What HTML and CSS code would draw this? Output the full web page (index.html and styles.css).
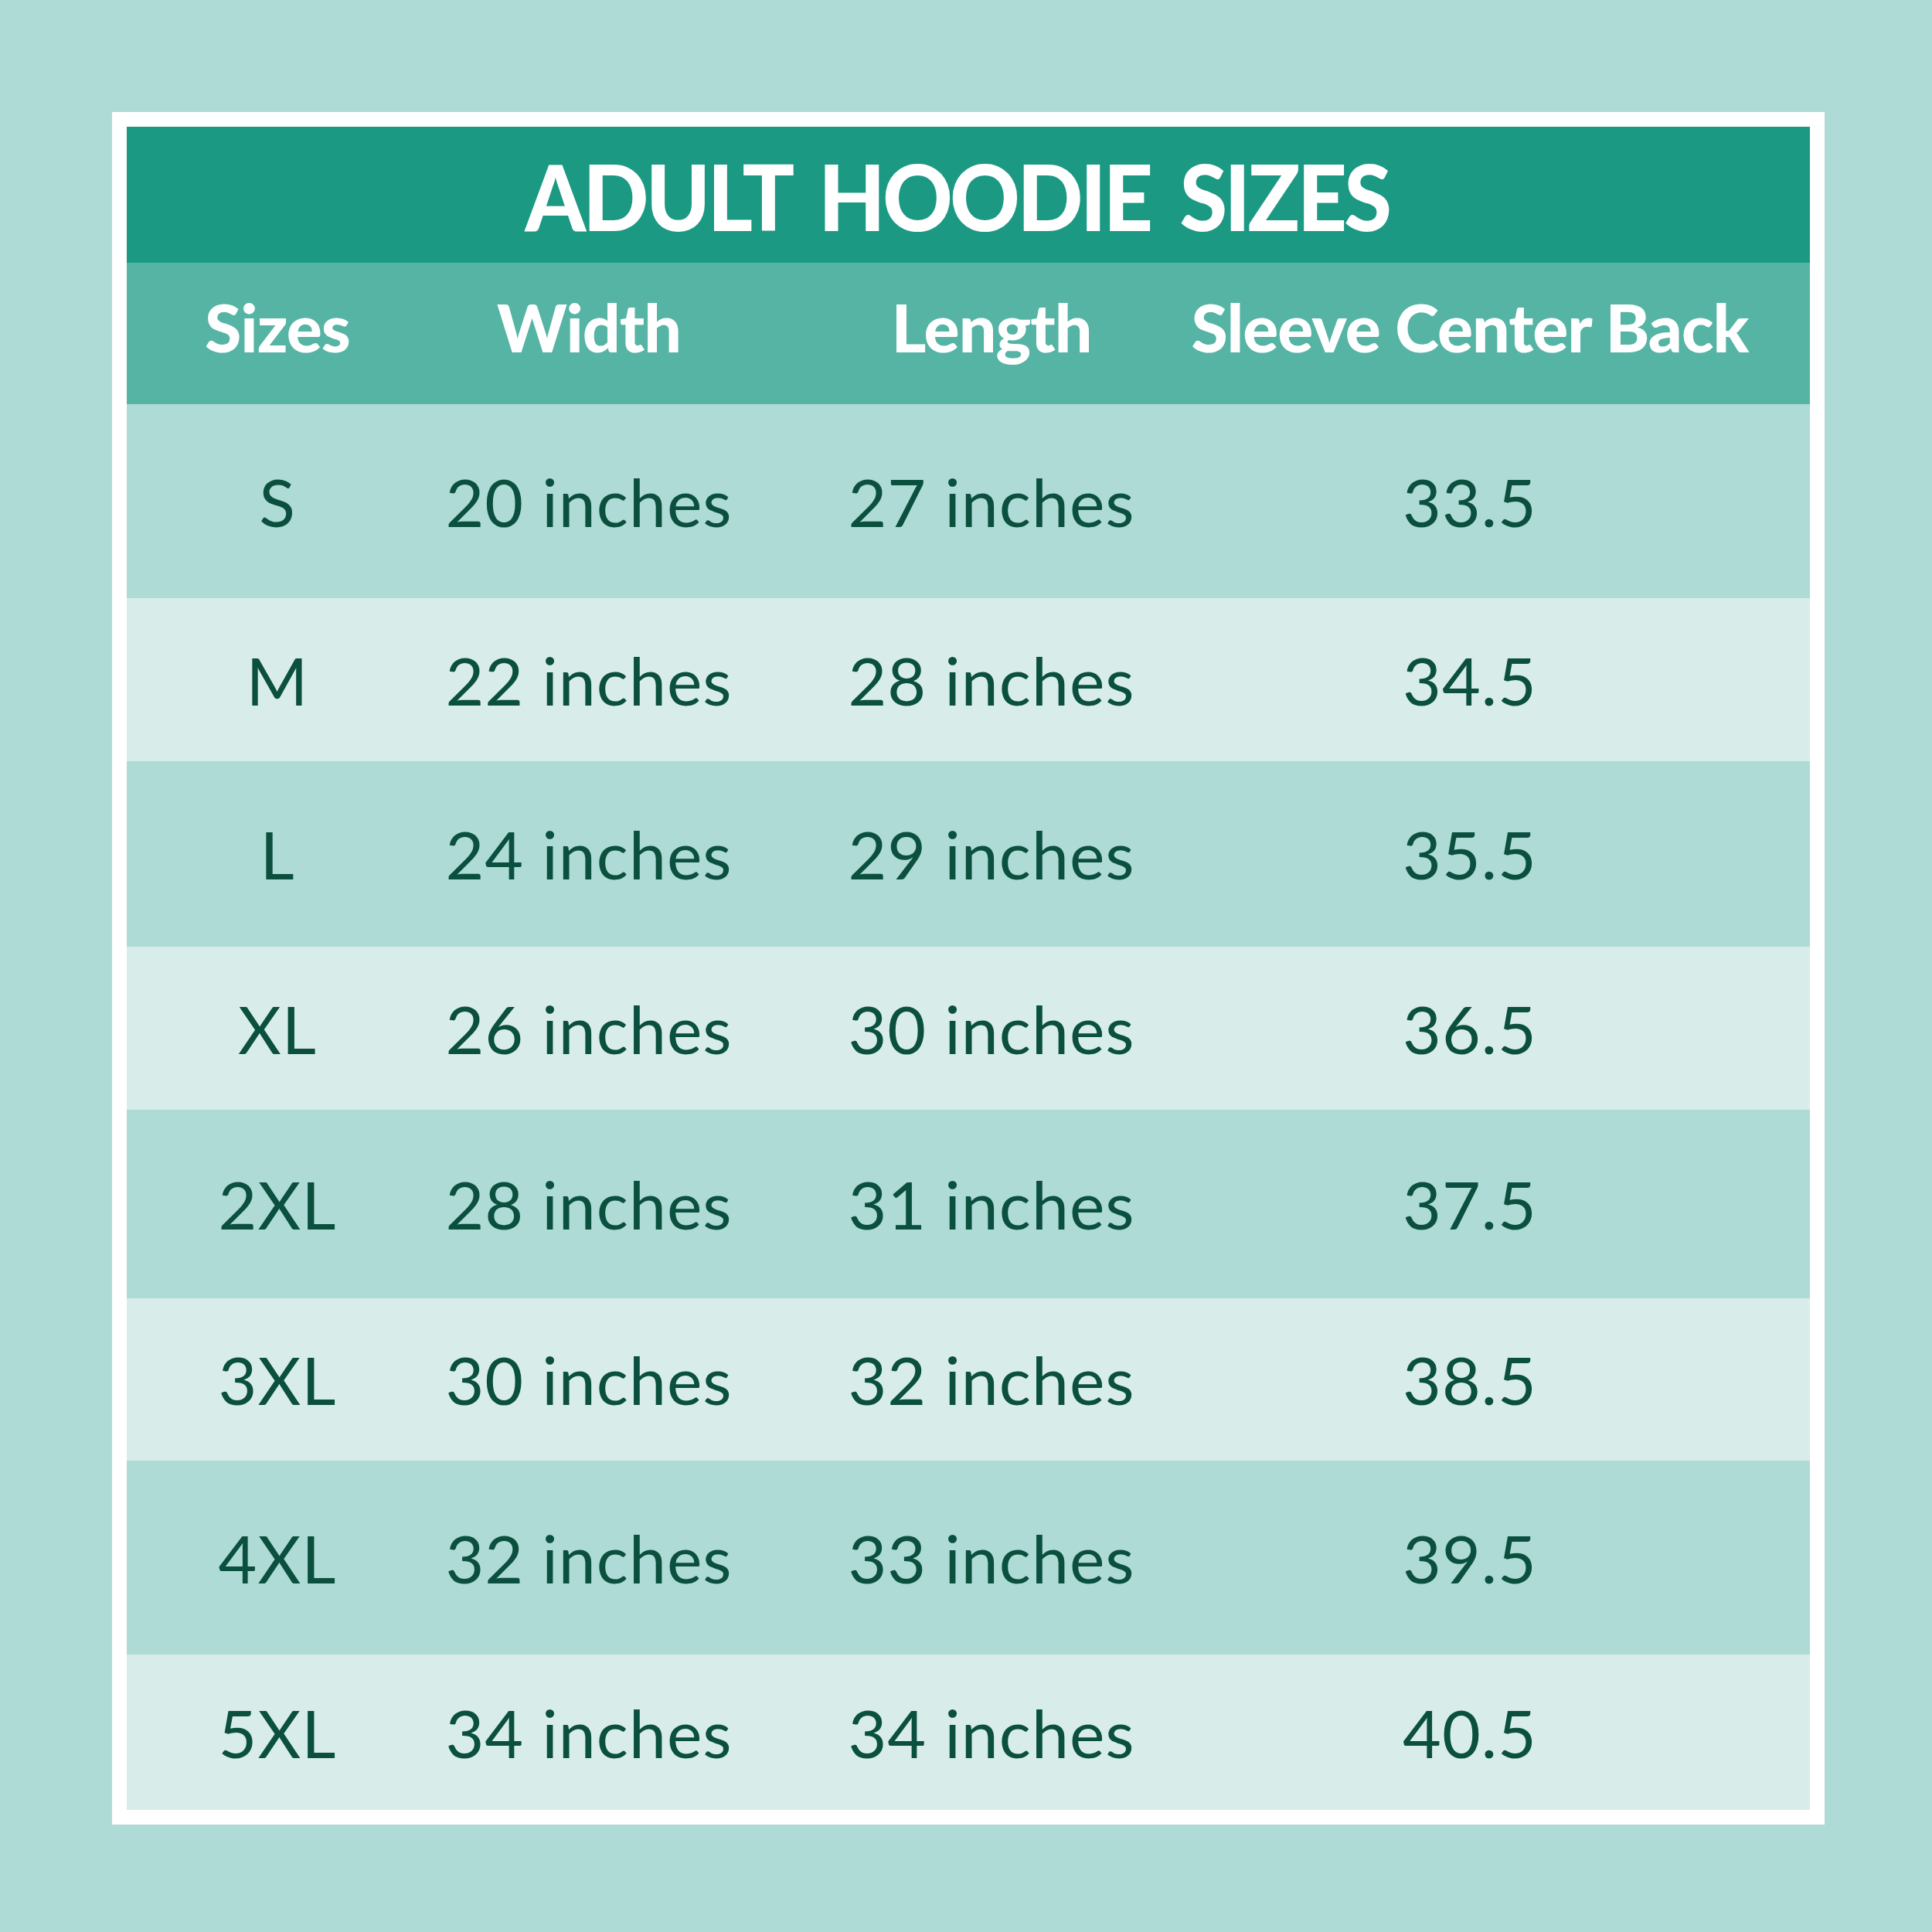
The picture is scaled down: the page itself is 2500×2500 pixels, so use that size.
FILE: index.html
```html
<!DOCTYPE html>
<html lang="en">
<head>
<meta charset="utf-8">
<title>Adult Hoodie Sizes</title>
<link rel="stylesheet" href="styles.css">
</head>
<body>
<main class="frame">
  <h1 class="title"><span class="title-text">ADULT HOODIE SIZES</span></h1>
  <div class="row head">
    <div class="cell">Sizes</div>
    <div class="cell">Width</div>
    <div class="cell">Length</div>
    <div class="cell">Sleeve Center Back</div>
  </div>
  <div class="rows">
    <div class="row"><div class="cell">S</div><div class="cell">20 inches</div><div class="cell">27 inches</div><div class="cell">33.5</div></div>
    <div class="row"><div class="cell">M</div><div class="cell">22 inches</div><div class="cell">28 inches</div><div class="cell">34.5</div></div>
    <div class="row"><div class="cell">L</div><div class="cell">24 inches</div><div class="cell">29 inches</div><div class="cell">35.5</div></div>
    <div class="row"><div class="cell">XL</div><div class="cell">26 inches</div><div class="cell">30 inches</div><div class="cell">36.5</div></div>
    <div class="row"><div class="cell">2XL</div><div class="cell">28 inches</div><div class="cell">31 inches</div><div class="cell">37.5</div></div>
    <div class="row"><div class="cell">3XL</div><div class="cell">30 inches</div><div class="cell">32 inches</div><div class="cell">38.5</div></div>
    <div class="row"><div class="cell">4XL</div><div class="cell">32 inches</div><div class="cell">33 inches</div><div class="cell">39.5</div></div>
    <div class="row"><div class="cell">5XL</div><div class="cell">34 inches</div><div class="cell">34 inches</div><div class="cell">40.5</div></div>
  </div>
</main>
</body>
</html>
```
FILE: styles.css
```css
html, body {
  margin: 0;
  padding: 0;
}
body {
  width: 2500px;
  height: 2500px;
  background: #aedbd6;
  padding: 145px 0 0 145px;
  box-sizing: border-box;
  font-family: "Lato", "Open Sans", sans-serif;
}
.frame {
  width: 2216px;
  height: 2216px;
  box-sizing: border-box;
  border: 19px solid #ffffff;
  display: flex;
  flex-direction: column;
}
.title {
  margin: 0;
  height: 176px;
  background: #1b9983;
  color: #ffffff;
  font-weight: 900;
  font-size: 118px;
  line-height: 1;
  display: flex;
  align-items: center;
  justify-content: center;
  padding: 4px 30px 0 0;
  box-sizing: border-box;
}
.title-text {
  display: inline-block;
  letter-spacing: -4px;
  word-spacing: 16px;
  transform: scaleX(0.95);
  white-space: nowrap;
}
.row {
  display: grid;
  grid-template-columns: 390px 416px 626px 612px 1fr;
}
.row .cell {
  display: flex;
  align-items: center;
  justify-content: center;
  white-space: nowrap;
  line-height: 1;
}
.head {
  height: 183px;
  background: #55b4a4;
  color: #ffffff;
  font-weight: 900;
  font-size: 86px;
  letter-spacing: -1px;
  padding-bottom: 18px;
  box-sizing: border-box;
}
.rows {
  flex: 1;
  display: grid;
  grid-template-rows: 251px 211px 240px 211px 244px 210px 251px 201px;
  color: #0b4f3f;
  font-size: 86px;
  font-weight: 400;
  letter-spacing: 1px;
}
.rows .row:nth-child(odd) {
  background: #aedbd6;
}
.rows .row:nth-child(even) {
  background: #d8edea;
}
```
